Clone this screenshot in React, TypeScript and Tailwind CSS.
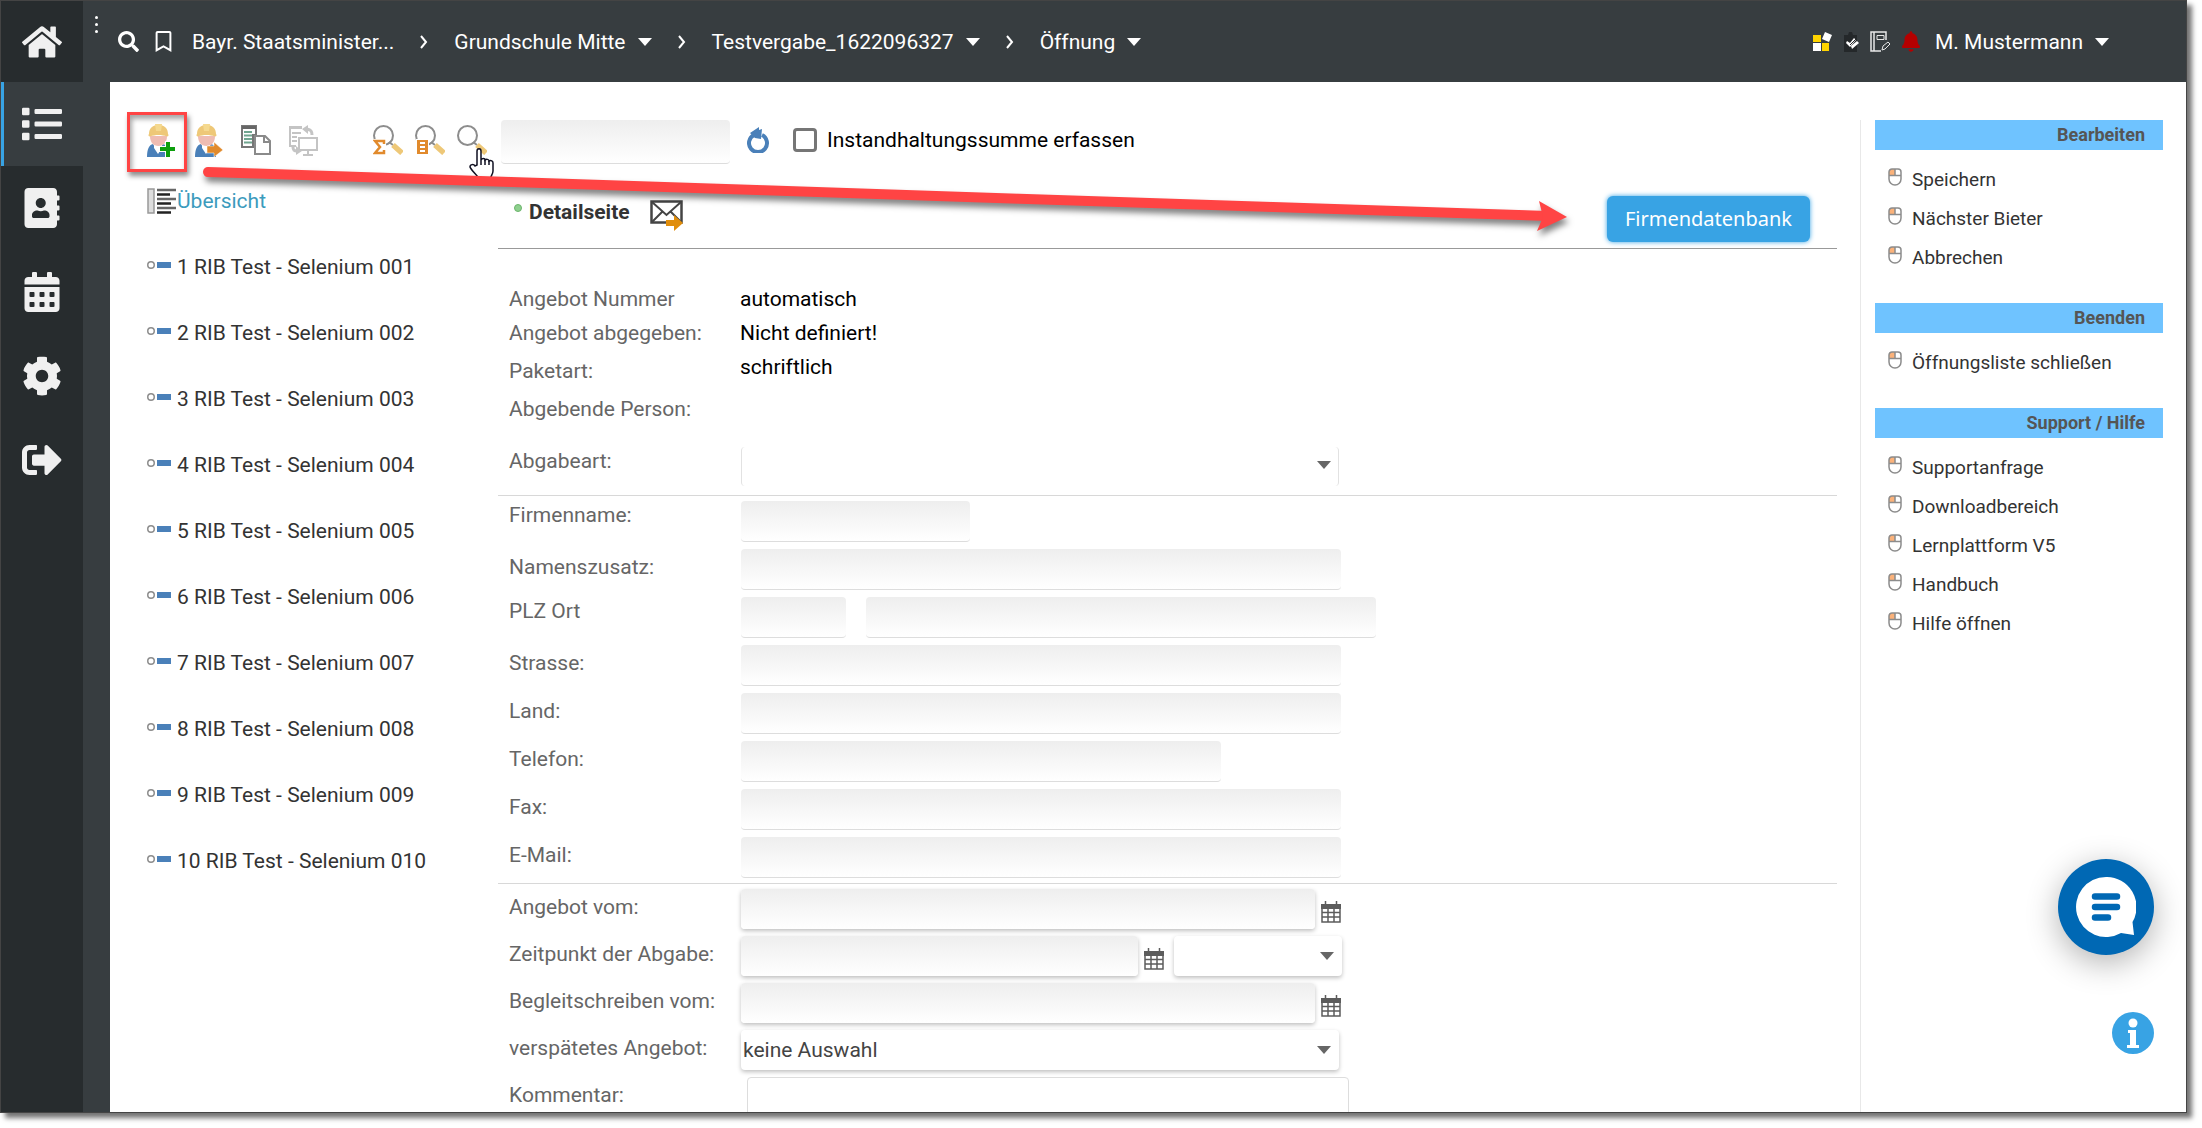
import type { ReactNode } from 'react';
import {
  FaAddressBook,
  FaBell,
  FaCalendarAlt,
  FaCog,
  FaHome,
  FaList,
  FaRegBookmark,
  FaSearch,
  FaSignOutAlt,
} from 'react-icons/fa';

const navItems = [
  { label: 'Liste', icon: <FaList className="size-10" />, active: true },
  { label: 'Adressbuch', icon: <FaAddressBook className="size-10" /> },
  { label: 'Kalender', icon: <FaCalendarAlt className="size-10" /> },
  { label: 'Einstellungen', icon: <FaCog className="size-10" /> },
  { label: 'Abmelden', icon: <FaSignOutAlt className="size-10" /> },
];

const bidders = [
  '1 RIB Test - Selenium 001',
  '2 RIB Test - Selenium 002',
  '3 RIB Test - Selenium 003',
  '4 RIB Test - Selenium 004',
  '5 RIB Test - Selenium 005',
  '6 RIB Test - Selenium 006',
  '7 RIB Test - Selenium 007',
  '8 RIB Test - Selenium 008',
  '9 RIB Test - Selenium 009',
  '10 RIB Test - Selenium 010',
];

const actionGroups = [
  { title: 'Bearbeiten', items: ['Speichern', 'Nächster Bieter', 'Abbrechen'] },
  { title: 'Beenden', items: ['Öffnungsliste schließen'] },
  {
    title: 'Support / Hilfe',
    items: ['Supportanfrage', 'Downloadbereich', 'Lernplattform V5', 'Handbuch', 'Hilfe öffnen'],
  },
];

const flatInput = 'rounded-sm border-b border-[#ddd] bg-linear-to-b from-[#eee] to-white px-1 outline-none';
const raisedInput =
  'h-10 rounded-sm bg-linear-to-b from-[#eee] to-white px-1 shadow-[0_2px_4px_rgba(0,0,0,0.25)] outline-none';
const raisedSelect =
  'h-10 w-full appearance-none rounded-sm bg-white px-0.5 text-[#444] shadow-[0_2px_4px_rgba(0,0,0,0.25)] outline-none';

function Caret({ className }: { className?: string }) {
  return (
    <svg viewBox="0 0 14 8" className={`h-2 w-3.5 ${className ?? ''}`} fill="currentColor">
      <path d="M0 0h14L7 8z" />
    </svg>
  );
}

function Chevron() {
  return (
    <svg viewBox="0 0 8 14" className="h-3.5 w-2" fill="none" stroke="currentColor" strokeWidth="2">
      <path d="M1 1l5 6-5 6" />
    </svg>
  );
}

function Worker({ children }: { children: ReactNode }) {
  return (
    <svg viewBox="0 0 28 33" className="h-[33px] w-7">
      <path d="M0 33c0-8 2-12 6-13l5 8 5-8c4 1 5 4 5 13z" fill="#4a80b9" />
      <path d="M7 20h8v4l-4 6-4-6z" fill="#fff" />
      <path d="M3 12h17c0 6-3 10-8.5 10S3 18 3 12z" fill="#efbcb2" />
      <path d="M2 10C2 4 6 1 11.500 1S21 4 21 10c1 1 .5 2.500-1 2.500-5-2-12-2-17 0-1.500 0-2-1.500-1-2.500z" fill="#eec878" />
      <path d="M8 0h7l-1 7H9z" fill="#f5d98f" />
      {children}
    </svg>
  );
}

function WorkerAddIcon() {
  return (
    <Worker>
      <path d="M18 17h6v5h5v6h-5v6h-6v-6h-6v-6h6z" fill="#fff" />
      <path d="M19 18h4v5h5v4h-5v6h-4v-6h-6v-4h6z" fill="#0d9f0d" />
    </Worker>
  );
}

function WorkerNextIcon() {
  return (
    <Worker>
      <path d="M12 22h7v-4l9 8-9 7v-4h-7z" fill="#e18a2c" stroke="#fff" strokeWidth="0.5" />
    </Worker>
  );
}

function CopyIcon() {
  return (
    <svg viewBox="0 0 30 31" className="h-[31px] w-[30px]" fill="none">
      <path d="M1 1h14v9h-3v12H1z" fill="#fff" stroke="#777" strokeWidth="2" />
      <path d="M1 1h14v3H1z" fill="#666" />
      <path d="M3 7h8M3 10.5h8M3 14h8M3 17.5h8" stroke="#6fa58f" strokeWidth="2" />
      <path d="M14 11h10l5 5v13H14z" fill="#fff" stroke="#8a8a8a" strokeWidth="2" />
      <path d="M23 11v6h6" stroke="#8a8a8a" strokeWidth="2" />
    </svg>
  );
}

function TransferIcon() {
  return (
    <svg viewBox="0 0 30 31" className="h-[31px] w-[30px]" fill="none" stroke="#c4c4c4">
      <path d="M1 1v20h6" strokeWidth="2" />
      <path d="M0 2.5h13" strokeWidth="3" />
      <path d="M3 8h9M3 12h5M3 16h5" strokeWidth="2" />
      <path d="M10 13h18v12H10z" fill="#fff" strokeWidth="2" />
      <path d="M19 25v4M14 30h10" strokeWidth="2" />
      <path d="M23 10c0-4-1-5-5-6" strokeWidth="3" />
      <path d="M19 0v9l-6-5z" fill="#c4c4c4" stroke="none" />
      <path d="M4 22c0 3 1 4 4 4" strokeWidth="3" />
      <path d="M7 21v9l6-4z" fill="#c4c4c4" stroke="none" />
    </svg>
  );
}

function LensIcon({ children }: { children?: ReactNode }) {
  return (
    <svg viewBox="0 0 30 30" className="size-[30px]" fill="none">
      <circle cx="10.5" cy="10.5" r="9.5" stroke="#8d8d8d" strokeWidth="2" />
      <path d="M16 17l4 3" stroke="#8d8d8d" strokeWidth="2" />
      <path d="M20 20l9 8" stroke="#eec878" strokeWidth="5.5" />
      {children}
    </svg>
  );
}

function RefreshIcon() {
  return (
    <svg viewBox="0 0 23 26" className="h-[26px] w-[23px]" fill="none">
      <path d="M15 8a9 9 0 1 1-8 0" stroke="#4a80b9" strokeWidth="4" />
      <path d="M3 6l9-6v3l3-1-1 10-6-1z" fill="#4a80b9" />
    </svg>
  );
}

function OverviewIcon() {
  return (
    <svg viewBox="0 0 30 26" className="h-[26px] w-[30px]">
      <path d="M1 1h6v24H1z" fill="#ddd" stroke="#999" strokeWidth="1.5" />
      <path d="M10 2h19M10 11h19M10 20h19" stroke="#666" strokeWidth="2.5" />
      <path d="M10 6.5h13M10 15.5h14M10 24.5h14" stroke="#222" strokeWidth="2.5" />
    </svg>
  );
}

function BidderIcon() {
  return (
    <svg viewBox="0 0 24 10" className="mb-1 h-2.5 w-6 shrink-0">
      <circle cx="4" cy="5" r="3.25" fill="none" stroke="#8c8c8c" strokeWidth="1.5" />
      <path d="M10 2h14v6H10z" fill="#4a80b9" />
    </svg>
  );
}

function MailForwardIcon() {
  return (
    <svg viewBox="0 0 34 31" className="h-[31px] w-[34px]" fill="none">
      <path d="M1.5 1.5h30v21h-30z" stroke="#444" strokeWidth="2.5" />
      <path d="M2 2l14.5 13L31 2M2 22l10-10M31 22l-10-10" stroke="#444" strokeWidth="2" />
      <path d="M16 20h8v-5l9 8-9 8v-5h-8z" fill="#e08d0b" />
    </svg>
  );
}

function MouseIcon() {
  return (
    <svg viewBox="0 0 14 18" className="h-[18px] w-3.5" fill="none">
      <path d="M1 3a2 2 0 0 1 2-2h4v6H1z" fill="#fbb27a" />
      <path
        d="M1 4a3 3 0 0 1 3-3h6a3 3 0 0 1 3 3v7a6 6 0 0 1-12 0zM1 7.5h12M7 1v6"
        stroke="#8c8c8c"
        strokeWidth="1.5"
      />
    </svg>
  );
}

function CalendarIcon() {
  return (
    <svg viewBox="0 0 20 22" className="mt-1.5 h-[22px] w-5 shrink-0" fill="none" stroke="#5c5c5c">
      <path d="M0 3h20v5H0z" fill="#5c5c5c" stroke="none" />
      <path d="M4.5 0v4M15.5 0v4" strokeWidth="1.5" />
      <path d="M1 7v14h18V7M1 11.5h18M1 16h18M7 8v13M13 8v13" strokeWidth="1.5" />
    </svg>
  );
}

function TilesIcon() {
  return (
    <svg viewBox="0 0 19 19" className="size-[19px]">
      <path d="M0 3h8v7H0zM9 11h7v8H9z" fill="#ffd400" />
      <path d="M0 11h8v8H0zM12 0l7 3-3 7-7-3z" fill="#fff" />
    </svg>
  );
}

function ClipboardIcon() {
  return (
    <svg viewBox="0 0 16 20" className="h-5 w-4">
      <path d="M1 3h4l1-3h3l1 3h4v17H1z" fill="#24282a" />
      <path d="M4 9l3 2 4-5 2 2-6 7-4-4z" fill="#fff" />
      <path d="M8 14l6-5 2 2-7 6z" fill="#fff" />
      <path d="M7 13l6-6" stroke="#24282a" />
    </svg>
  );
}

function NotebookIcon() {
  return (
    <svg viewBox="0 0 21 21" className="size-[21px]" fill="none" stroke="#e8e8e8">
      <path d="M16 9V1H1v19h10M4 1v19" strokeWidth="1.5" />
      <path d="M7 4.5h7v4H7z" />
      <path d="M12 19l1-4 5-4 2 2-5 5z" />
    </svg>
  );
}

function Crumb({ children }: { children: ReactNode }) {
  return (
    <button type="button" className="flex items-center gap-3">
      {children}
      <Caret />
    </button>
  );
}

function Header() {
  return (
    <header className="flex h-[81px] shrink-0 items-center bg-[#373d40] pr-[77px] text-white">
      <button type="button" aria-label="Menü" className="flex w-[27px] flex-col items-center gap-1 self-start pt-[15px]">
        <span className="size-[3px] rounded-full bg-white" />
        <span className="size-[3px] rounded-full bg-white" />
        <span className="size-[3px] rounded-full bg-white" />
      </button>
      <nav className="flex items-center pl-2">
        <button type="button" aria-label="Suchen">
          <FaSearch className="size-[21px]" />
        </button>
        <button type="button" aria-label="Lesezeichen" className="mx-4">
          <FaRegBookmark className="h-[21px] w-[17px]" />
        </button>
        <a href="#ministerium" className="ml-1 mr-[26px]">
          Bayr. Staatsminister...
        </a>
        <div className="flex items-center gap-[26px]">
          <Chevron />
          <Crumb>Grundschule Mitte</Crumb>
          <Chevron />
          <Crumb>Testvergabe_1622096327</Crumb>
          <Chevron />
          <Crumb>Öffnung</Crumb>
        </div>
      </nav>
      <div className="ml-auto flex items-center gap-[11px]">
        <TilesIcon />
        <ClipboardIcon />
        <NotebookIcon />
        <FaBell className="h-[21px] w-[18px] text-[#b40000]" />
        <button type="button" className="ml-1 flex items-center gap-3">
          M. Mustermann
          <Caret />
        </button>
      </div>
    </header>
  );
}

function Toolbar() {
  return (
    <div className="flex h-10 shrink-0 items-center">
      <div className="flex items-center gap-[18px]">
        <button type="button" aria-label="Bieter hinzufügen" className="relative mr-0.5">
          <WorkerAddIcon />
          <span className="absolute -left-5 -top-3 size-[60px] border-[3px] border-[#f44] shadow-[2px_4px_5px_rgba(0,0,0,0.45),inset_2px_4px_5px_rgba(0,0,0,0.35)]" />
        </button>
        <button type="button" aria-label="Bieter übernehmen">
          <WorkerNextIcon />
        </button>
        <button type="button" aria-label="Kopieren">
          <CopyIcon />
        </button>
        <button type="button" aria-label="Übertragen">
          <TransferIcon />
        </button>
      </div>
      <div className="ml-[54px] flex items-center gap-3">
        <button type="button" aria-label="Summe suchen">
          <LensIcon>
            <path d="M0 14h13v15H0z" fill="#fff" />
            <path d="M11 19v-3H2l5 6-5 6h9v-3" stroke="#e18a2c" strokeWidth="2.5" />
          </LensIcon>
        </button>
        <button type="button" aria-label="Position suchen">
          <LensIcon>
            <path d="M1 14h13v15H1z" fill="#fff" />
            <path d="M2 15h11v14H2z" fill="#e18a2c" />
            <path d="M5 18h5M5 22h5M5 26h5" stroke="#fff" strokeWidth="2" />
          </LensIcon>
        </button>
        <button type="button" aria-label="Suchen" className="relative">
          <LensIcon />
          <svg viewBox="0 0 26 31" className="absolute left-3 top-[23px] h-[31px] w-[26px]">
            <path
              d="M8 17V3c0-3 4-3 4 0v9c1-2 4-2 4 0 1-1 4-1 4 1 2-1 4 0 4 2v8c0 3-2 5-3 8H10c-1-3-8-9-9-12 0-3 4-3 5-1z"
              fill="#fff"
              stroke="#112"
              strokeWidth="1.5"
            />
            <path d="M12 12v5M16 12v5M20 13v4" stroke="#112" strokeWidth="1.5" />
          </svg>
        </button>
      </div>
      <input aria-label="Suchbegriff" className={`ml-3.5 h-11 w-[229px] self-start ${flatInput}`} />
      <button type="button" aria-label="Aktualisieren" className="mx-[17px]">
        <RefreshIcon />
      </button>
      <label className="flex items-center gap-2.5 pl-1.5 text-black">
        <input type="checkbox" className="size-6 appearance-none rounded-sm border-[3px] border-[#767676] bg-white" />
        Instandhaltungssumme erfassen
      </label>
    </div>
  );
}

function Row({ label, id, high, children }: { label: string; id: string; high?: boolean; children: ReactNode }) {
  return (
    <div className="grid grid-cols-[232px_1fr] items-start pl-[11px]">
      <label htmlFor={id} className={high ? 'pt-0.5' : 'pt-1.5'}>
        {label}
      </label>
      {children}
    </div>
  );
}

function DetailForm() {
  return (
    <form className="min-w-0 flex-1 text-[#666]">
      <div className="flex items-start border-b border-[#999] pb-1.5 pr-[27px] pt-2">
        <span className="ml-4 mt-2 size-2 rounded-full border border-[#6cb56c] bg-[#8fd08f]" />
        <h1 className="ml-[7px] mt-1 font-bold text-[#333]">Detailseite</h1>
        <button type="button" aria-label="Nachricht senden" className="ml-5 mt-1">
          <MailForwardIcon />
        </button>
        <button
          type="button"
          className="ml-auto h-[46px] rounded-md bg-[#38a3e4] px-[18px] font-['Noto_Sans',sans-serif] text-xl text-white shadow-[0_0_5px_#38a3e4]"
        >
          Firmendatenbank
        </button>
      </div>

      <dl className="grid grid-cols-[231px_1fr] gap-y-2.5 pb-3 pl-[11px] pt-[38px]">
        <dt>Angebot Nummer</dt>
        <dd className="text-black">automatisch</dd>
        <dt>Angebot abgegeben:</dt>
        <dd className="text-black">Nicht definiert!</dd>
        <dt className="pt-1">Paketart:</dt>
        <dd className="text-black">schriftlich</dd>
        <dt className="pt-1">Abgebende Person:</dt>
        <dd />
      </dl>

      <div className="border-b border-[#d8d8d8] pb-[9px] pt-3.5">
        <Row label="Abgabeart:" id="abgabeart" high>
          <div className="relative h-[39px] w-[598px]">
            <select id="abgabeart" className="h-full w-full appearance-none rounded-sm border-x border-[#e2e2e2] px-1" />
            <Caret className="pointer-events-none absolute right-2 top-3.5" />
          </div>
        </Row>
      </div>

      <div className="flex flex-col gap-[7px] border-b border-[#d8d8d8] py-[5px]">
        <Row label="Firmenname:" id="firmenname" high>
          <input id="firmenname" className={`h-[41px] w-[229px] ${flatInput}`} />
        </Row>
        <Row label="Namenszusatz:" id="namenszusatz">
          <input id="namenszusatz" className={`h-[41px] w-[600px] ${flatInput}`} />
        </Row>
        <Row label="PLZ Ort" id="plz" high>
          <div className="flex gap-5">
            <input id="plz" className={`h-[41px] w-[105px] ${flatInput}`} />
            <input aria-label="Ort" className={`h-[41px] w-[510px] ${flatInput}`} />
          </div>
        </Row>
        <Row label="Strasse:" id="strasse">
          <input id="strasse" className={`h-[41px] w-[600px] ${flatInput}`} />
        </Row>
        <Row label="Land:" id="land">
          <input id="land" className={`h-[41px] w-[600px] ${flatInput}`} />
        </Row>
        <Row label="Telefon:" id="telefon">
          <input id="telefon" className={`h-[41px] w-[480px] ${flatInput}`} />
        </Row>
        <Row label="Fax:" id="fax">
          <input id="fax" className={`h-[41px] w-[600px] ${flatInput}`} />
        </Row>
        <Row label="E-Mail:" id="email">
          <input id="email" className={`h-[41px] w-[600px] ${flatInput}`} />
        </Row>
      </div>

      <div className="flex flex-col gap-[7px] pt-[5px]">
        <Row label="Angebot vom:" id="angebot-vom">
          <div className="flex items-center gap-1.5">
            <input id="angebot-vom" className={`w-[574px] ${raisedInput}`} />
            <CalendarIcon />
          </div>
        </Row>
        <Row label="Zeitpunkt der Abgabe:" id="zeitpunkt">
          <div className="flex items-center gap-1.5">
            <input id="zeitpunkt" className={`w-[397px] ${raisedInput}`} />
            <CalendarIcon />
            <div className="relative ml-1 w-[168px]">
              <select aria-label="Uhrzeit" className={raisedSelect} />
              <Caret className="pointer-events-none absolute right-2 top-4" />
            </div>
          </div>
        </Row>
        <Row label="Begleitschreiben vom:" id="begleitschreiben">
          <div className="flex items-center gap-1.5">
            <input id="begleitschreiben" className={`w-[574px] ${raisedInput}`} />
            <CalendarIcon />
          </div>
        </Row>
        <Row label="verspätetes Angebot:" id="verspaetet">
          <div className="relative w-[598px]">
            <select id="verspaetet" className={raisedSelect}>
              <option>keine Auswahl</option>
            </select>
            <Caret className="pointer-events-none absolute right-2 top-4" />
          </div>
        </Row>
        <Row label="Kommentar:" id="kommentar">
          <textarea id="kommentar" rows={4} className="ml-1.5 w-[602px] rounded-sm border border-[#ddd] outline-none" />
        </Row>
      </div>
    </form>
  );
}

function ActionPanel() {
  return (
    <aside className="w-[326px] shrink-0 border-l border-[#e8e8e8] pl-3.5 pr-[23px] text-[19px] text-[#333]">
      {actionGroups.map((group) => (
        <section key={group.title} className="mb-5">
          <h2 className="mb-4 bg-[#6fc3ff] pr-[18px] text-right text-lg/[30px] font-bold text-[#555]">{group.title}</h2>
          <ul>
            {group.items.map((item) => (
              <li key={item}>
                <a href="#aktion" className="flex h-[39px] items-start gap-2.5 pl-[13px] leading-7">
                  <span className="pt-0.5">
                    <MouseIcon />
                  </span>
                  {item}
                </a>
              </li>
            ))}
          </ul>
        </section>
      ))}
    </aside>
  );
}

// red pointer from the toolbar to the company database button
function GuideArrow() {
  return (
    <svg
      viewBox="0 0 1380 90"
      className="pointer-events-none absolute left-[196px] top-[160px] h-[90px] w-[1380px] drop-shadow-[2px_5px_3px_rgba(0,0,0,0.5)]"
    >
      <path d="M11 11L1350 55" stroke="#f44" strokeWidth="10" strokeLinecap="round" />
      <path d="M1342 40l28 16-30 14 6-14z" fill="#f44" />
    </svg>
  );
}

export default function App() {
  return (
    <div className="h-screen overflow-hidden bg-white pb-[15px] pr-[15px] font-[Roboto,sans-serif] text-[21px]/6">
      <div className="relative flex h-full overflow-clip border border-[#444] bg-white text-[#333] shadow-[5px_5px_5px_rgba(0,0,0,0.55)]">
        <nav className="flex w-[82px] shrink-0 flex-col bg-[#272c2e] text-[#f0f0f0]">
          <a href="#start" aria-label="Startseite" className="flex h-[81px] items-center justify-center">
            <FaHome className="h-9 w-10" />
          </a>
          {navItems.map((item) => (
            <a
              key={item.label}
              href="#nav"
              aria-label={item.label}
              className={
                item.active
                  ? 'flex h-[84px] items-center justify-center border-l-[3px] border-[#38a3e4] bg-[#373d40] pr-[3px]'
                  : 'flex h-[84px] items-center justify-center'
              }
            >
              {item.icon}
            </a>
          ))}
        </nav>

        <div className="flex min-w-0 flex-1 flex-col">
          <Header />
          <div className="flex min-h-0 flex-1 bg-[#373d40] pl-[27px]">
            <main className="flex min-w-0 flex-1 bg-white pt-[38px]">
              <div className="flex min-w-0 flex-1 flex-col pl-[37px] pr-[23px]">
                <Toolbar />
                <div className="flex pt-7">
                  <div className="w-[351px] shrink-0">
                    <a href="#uebersicht" className="flex h-[26px] items-center text-[#3c9bbd]">
                      <OverviewIcon />
                      Übersicht
                    </a>
                    <ul className="pt-5">
                      {bidders.map((bidder) => (
                        <li key={bidder}>
                          <a href="#bieter" className="flex h-[66px] items-center gap-1.5">
                            <BidderIcon />
                            {bidder}
                          </a>
                        </li>
                      ))}
                    </ul>
                  </div>
                  <DetailForm />
                </div>
              </div>
              <ActionPanel />
            </main>
          </div>
        </div>

        <GuideArrow />

        <div className="absolute bottom-[58px] right-8 flex flex-col items-end gap-[57px]">
          <button
            type="button"
            aria-label="Chat öffnen"
            className="flex size-24 items-center justify-center rounded-full bg-[#0068b4] shadow-[0_8px_32px_rgba(0,0,0,0.3)]"
          >
            <svg viewBox="0 0 60 60" className="size-[60px]">
              <path d="M30 0a30 30 0 0 1 26.5 45L58 58l-13-2A30 30 0 1 1 30 0z" fill="#fff" />
              <path d="M19 19.5h22M19 30h22M19 40.5h13" stroke="#0068b4" strokeWidth="6.5" strokeLinecap="round" />
            </svg>
          </button>
          <button type="button" aria-label="Information">
            <svg viewBox="0 0 42 42" className="size-[42px]">
              <circle cx="21" cy="21" r="21" fill="#38a3e4" />
              <circle cx="21" cy="11" r="4.5" fill="#fff" />
              <path d="M16 18h8v15h3v3H15v-3h3V21h-2z" fill="#fff" />
            </svg>
          </button>
        </div>
      </div>
    </div>
  );
}
